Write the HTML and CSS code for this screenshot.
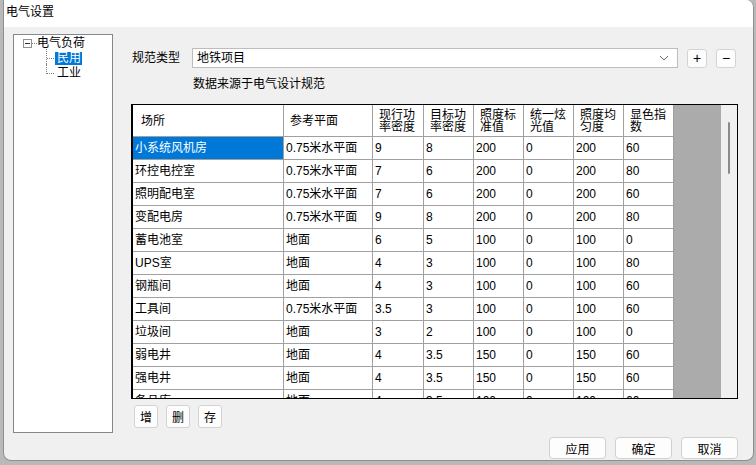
FILE: index.html
```html
<!DOCTYPE html>
<html lang="zh">
<head>
<meta charset="utf-8">
<title>电气设置</title>
<link rel="stylesheet" href="styles.css">
</head>
<body>
<div class="dialog">
  <div class="titlebar">电气设置</div>
  <div class="body">
    <div class="top">
      <div class="tree">
        <div class="root">
          <span class="expander"><span class="minus"></span></span>
          <span class="hconn"></span>
          <span class="node">电气负荷</span>
        </div>
        <div class="children">
          <div class="child"><span class="node sel">民用</span></div>
          <div class="child"><span class="node">工业</span></div>
        </div>
      </div>
      <div class="panel">
        <div class="spec-row">
          <span class="lbl">规范类型</span>
          <div class="combo">
            <span class="combo-text">地铁项目</span>
            <svg class="chev" width="10" height="6" viewBox="0 0 10 6"><path d="M1 1 L5 5 L9 1" fill="none" stroke="#6a6a6a" stroke-width="1"/></svg>
          </div>
          <button class="sq">+</button>
          <button class="sq">−</button>
        </div>
        <div class="source">数据来源于电气设计规范</div>
        <div class="grid-box">
          <div class="grid-scroll">
            <div class="grid">
              <div class="hd first">场所</div>
              <div class="hd">参考平面</div>
              <div class="hd two">现行功<br>率密度</div>
              <div class="hd two">目标功<br>率密度</div>
              <div class="hd two">照度标<br>准值</div>
              <div class="hd two">统一炫<br>光值</div>
              <div class="hd two">照度均<br>匀度</div>
              <div class="hd two">显色指<br>数</div>

              <div class="c sel">小系统风机房</div><div class="c">0.75米水平面</div><div class="c">9</div><div class="c">8</div><div class="c">200</div><div class="c">0</div><div class="c">200</div><div class="c">60</div>
              <div class="c">环控电控室</div><div class="c">0.75米水平面</div><div class="c">7</div><div class="c">6</div><div class="c">200</div><div class="c">0</div><div class="c">200</div><div class="c">80</div>
              <div class="c">照明配电室</div><div class="c">0.75米水平面</div><div class="c">7</div><div class="c">6</div><div class="c">200</div><div class="c">0</div><div class="c">200</div><div class="c">60</div>
              <div class="c">变配电房</div><div class="c">0.75米水平面</div><div class="c">9</div><div class="c">8</div><div class="c">200</div><div class="c">0</div><div class="c">200</div><div class="c">80</div>
              <div class="c">蓄电池室</div><div class="c">地面</div><div class="c">6</div><div class="c">5</div><div class="c">100</div><div class="c">0</div><div class="c">100</div><div class="c">0</div>
              <div class="c">UPS室</div><div class="c">地面</div><div class="c">4</div><div class="c">3</div><div class="c">100</div><div class="c">0</div><div class="c">100</div><div class="c">80</div>
              <div class="c">钢瓶间</div><div class="c">地面</div><div class="c">4</div><div class="c">3</div><div class="c">100</div><div class="c">0</div><div class="c">100</div><div class="c">60</div>
              <div class="c">工具间</div><div class="c">0.75米水平面</div><div class="c">3.5</div><div class="c">3</div><div class="c">100</div><div class="c">0</div><div class="c">100</div><div class="c">60</div>
              <div class="c">垃圾间</div><div class="c">地面</div><div class="c">3</div><div class="c">2</div><div class="c">100</div><div class="c">0</div><div class="c">100</div><div class="c">0</div>
              <div class="c">弱电井</div><div class="c">地面</div><div class="c">4</div><div class="c">3.5</div><div class="c">150</div><div class="c">0</div><div class="c">150</div><div class="c">60</div>
              <div class="c">强电井</div><div class="c">地面</div><div class="c">4</div><div class="c">3.5</div><div class="c">150</div><div class="c">0</div><div class="c">150</div><div class="c">60</div>
              <div class="c">备品库</div><div class="c">地面</div><div class="c">4</div><div class="c">3.5</div><div class="c">100</div><div class="c">0</div><div class="c">100</div><div class="c">60</div>
            </div>
          </div>
          <div class="vscroll"><div class="thumb"></div></div>
        </div>
        <div class="row-btns">
          <button class="small">增</button>
          <button class="small">删</button>
          <button class="small">存</button>
        </div>
      </div>
    </div>
    <div class="footer">
      <button class="btn">应用</button>
      <button class="btn">确定</button>
      <button class="btn">取消</button>
    </div>
  </div>
</div>
</body>
</html>
```
FILE: styles.css
```css
html, body {
  margin: 0;
  padding: 0;
}
body {
  width: 756px;
  height: 465px;
  overflow: hidden;
  background: #b9b9b9;
  font-family: "Liberation Sans", "Noto Sans CJK SC", sans-serif;
  font-size: 12px;
  color: #000;
}
button {
  font-family: "Liberation Sans", "Noto Sans CJK SC", sans-serif;
  font-size: 12px;
  color: #000;
  padding: 0;
  cursor: default;
}
.dialog {
  margin-left: 3px;
  width: 751px;
  height: 461px;
  box-sizing: border-box;
  border: 1px solid #8e8e8e;
  border-top: 0;
  border-radius: 0 8px 8px 8px;
  background: #f0f0f0;
  overflow: hidden;
  display: flex;
  flex-direction: column;
}
.titlebar {
  height: 27px;
  flex: none;
  background: #ffffff;
  padding-left: 2px;
  line-height: 25px;
  font-size: 12px;
}
.body {
  flex: 1;
  padding: 7px 0 0 9px;
  display: flex;
  flex-direction: column;
}
.top {
  display: flex;
  height: 399px;
}
/* tree */
.tree {
  width: 100px;
  height: 399px;
  box-sizing: border-box;
  border: 1px solid #828790;
  background: #fff;
  padding: 1px 0 0 9px;
}
.root {
  display: flex;
  align-items: center;
  height: 15px;
}
.expander {
  width: 9px;
  height: 9px;
  box-sizing: border-box;
  border: 1px solid #919191;
  display: flex;
  align-items: center;
  justify-content: center;
  background: #fff;
}
.minus {
  width: 5px;
  height: 1px;
  background: #333;
}
.hconn {
  width: 5px;
  border-top: 1px dotted #808080;
}
.node {
  line-height: 13px;
  padding: 0 2px 0 0;
}
.root .node {
  padding-left: 0;
}
.children {
  margin-left: 23px;
}
.child {
  position: relative;
  height: 15px;
  padding-left: 9px;
  display: flex;
  align-items: center;
}
.child::before {
  content: "";
  position: absolute;
  left: 0;
  top: -2px;
  bottom: 0;
  border-left: 1px dotted #808080;
}
.child:last-child::before {
  bottom: 7px;
}
.child::after {
  content: "";
  position: absolute;
  left: 1px;
  top: 7px;
  width: 7px;
  border-top: 1px dotted #808080;
}
.child .node {
  padding: 0 1px 0 2px;
}
.child .node.sel {
  background: #0078d7;
  color: #fff;
}
/* right panel */
.panel {
  margin-left: 18px;
  width: 607px;
  padding-top: 14px;
  display: flex;
  flex-direction: column;
}
.spec-row {
  display: flex;
  align-items: center;
  height: 20px;
}
.lbl {
  width: 60px;
  padding-left: 1px;
  line-height: 20px;
}
.combo {
  width: 486px;
  height: 20px;
  box-sizing: border-box;
  border: 1px solid #bdbdbd;
  background: #fff;
  display: flex;
  align-items: center;
  justify-content: space-between;
  padding: 0 8px 0 4px;
}
.combo-text {
  line-height: 18px;
}
.sq {
  margin-left: 9px;
  width: 20px;
  height: 19px;
  box-sizing: border-box;
  border: 1px solid #d3d3d3;
  border-radius: 3px;
  background: #fdfdfd;
  font-size: 14px;
  line-height: 16px;
}
.source {
  margin: 8px 0 0 62px;
  line-height: 16px;
}
.grid-box {
  margin-top: 12px;
  height: 295px;
  box-sizing: border-box;
  border: 1px solid #000;
  border-left-width: 2px;
  display: flex;
}
.grid-scroll {
  width: 588px;
  background: #ababab;
  overflow: hidden;
}
.grid {
  display: grid;
  grid-template-columns: 151px 89px 51px repeat(5, 50px);
  grid-template-rows: 32px;
  grid-auto-rows: 23px;
  width: 541px;
}
.hd, .c {
  box-sizing: border-box;
  border-right: 1px solid #a0a0a0;
  border-bottom: 1px solid #a0a0a0;
  background: #fff;
  white-space: nowrap;
  overflow: hidden;
}
.hd {
  display: flex;
  align-items: center;
  padding-left: 6px;
  line-height: 12px;
}
.hd.first {
  padding-left: 8px;
}
.hd.two {
  line-height: 12px;
  padding-top: 1px;
}
.c {
  padding-left: 2px;
  line-height: 22px;
}
.c.sel {
  background: #0078d7;
  color: #fff;
}
.vscroll {
  flex: 1;
  background: #f0f0f0;
  display: flex;
  justify-content: center;
  padding-top: 17px;
}
.thumb {
  width: 2px;
  height: 52px;
  border-radius: 1px;
  background: #8b8b8b;
}
.row-btns {
  margin-top: 6px;
  margin-left: 3px;
  display: flex;
  gap: 8px;
}
.small {
  width: 24px;
  height: 23px;
  box-sizing: border-box;
  border: 1px solid #d3d3d3;
  border-radius: 3px;
  background: #fdfdfd;
}
.footer {
  margin-top: 4px;
  padding-right: 15px;
  display: flex;
  justify-content: flex-end;
  gap: 9px;
}
.btn {
  width: 57px;
  height: 22px;
  box-sizing: border-box;
  border: 1px solid #d0d0d0;
  border-radius: 4px;
  background: #fdfdfd;
}
```
